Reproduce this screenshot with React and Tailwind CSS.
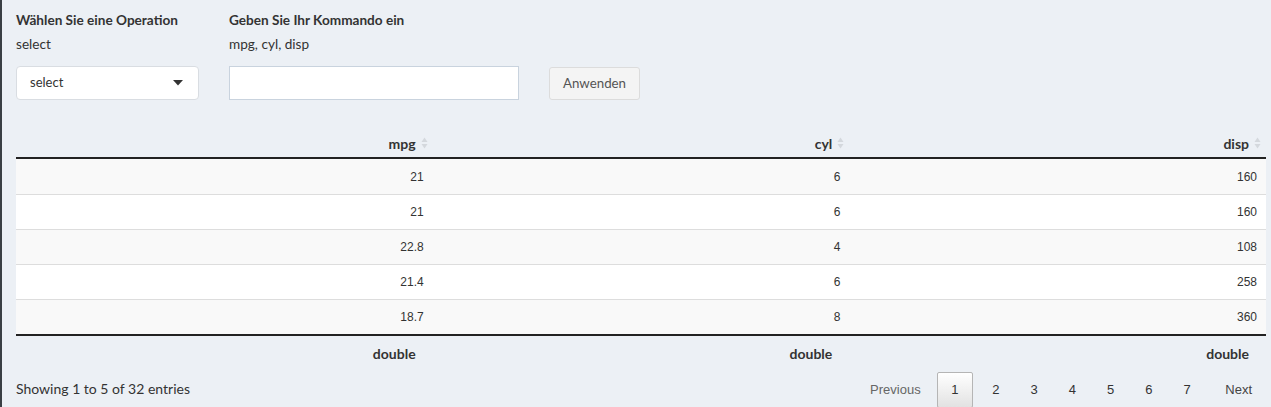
import React from 'react';

const rows = [
  ['21', '6', '160'],
  ['21', '6', '160'],
  ['22.8', '4', '108'],
  ['21.4', '6', '258'],
  ['18.7', '8', '360'],
];

const SortIcon = () => (
  <svg width="7" height="12" viewBox="0 0 7 12" className="ml-[5px] inline-block">
    <path d="M3.5 0.5 L6.5 5 L0.5 5 Z" fill="#d4d8dd" />
    <path d="M3.5 11.5 L6.5 7 L0.5 7 Z" fill="#d4d8dd" />
  </svg>
);

const Caret = () => (
  <svg width="10" height="6" viewBox="0 0 10 6">
    <path d="M0 0 L10 0 L5 5.5 Z" fill="#333" />
  </svg>
);

const ss = "font-['Lato',sans-serif]";
const ar = "font-['Liberation_Sans',Arial,sans-serif]";

export default function App() {
  const pages = ['1', '2', '3', '4', '5', '6', '7'];

  return (
    <div className={`w-[1271px] h-[407px] overflow-hidden bg-[#ecf0f5] border-l-2 border-[#3a3f44] pl-[14px] pr-[5px] text-[#333] ${ss}`}>
      {/* form row */}
      <div className="flex items-start pt-[10px]">
        <div className="w-[183px]">
          <div className="h-[20px] leading-[20px] text-[13.6px] font-bold whitespace-nowrap">Wählen Sie eine Operation</div>
          <div className="mt-[4px] h-[20px] leading-[20px] text-[13.6px]">select</div>
          <div className="mt-[12px] h-[34px] bg-white border border-[#d9dde2] rounded-[4px] flex items-center justify-between pl-[13px] pr-[15px] text-[13px]">
            <span>select</span>
            <Caret />
          </div>
        </div>
        <div className="ml-[30px] w-[290px]">
          <div className="h-[20px] leading-[20px] text-[13.6px] font-bold whitespace-nowrap">Geben Sie Ihr Kommando ein</div>
          <div className="mt-[4px] h-[20px] leading-[20px] text-[13.6px]">mpg, cyl, disp</div>
          <input className="mt-[12px] h-[34px] w-[290px] bg-white border border-[#c9d3de] outline-none px-[12px] text-[13px]" />
        </div>
        <button className="ml-[30px] mt-[57px] h-[33px] px-[13px] bg-[#f4f4f4] border border-[#dcdcdc] rounded-[3px] text-[13.3px] text-[#555]">
          Anwenden
        </button>
      </div>

      {/* table */}
      <div className="mt-[29px]">
        <div className="grid grid-cols-3 h-[30px] border-b-2 border-[#222] text-[14px] font-bold">
          {['mpg', 'cyl', 'disp'].map(h => (
            <div key={h} className="flex items-center justify-end pr-[5px]">
              <span>{h}</span>
              <SortIcon />
            </div>
          ))}
        </div>
        {rows.map((r, i) => (
          <div
            key={i}
            className={`grid grid-cols-3 h-[35px] ${i > 0 ? 'border-t border-[#ddd]' : ''} ${i % 2 === 0 ? 'bg-[#f9f9f9]' : 'bg-white'} text-[12px] ${ar}`}
          >
            {r.map((c, j) => (
              <div key={j} className="flex items-center justify-end pr-[9px]">{c}</div>
            ))}
          </div>
        ))}
        <div className="grid grid-cols-3 h-[36px] border-t-2 border-[#222] text-[14px] font-bold">
          {['double', 'double', 'double'].map((f, j) => (
            <div key={j} className="flex items-center justify-end pr-[17px]">{f}</div>
          ))}
        </div>
      </div>

      {/* info + pagination */}
      <div className="flex items-start justify-between">
        <div className="pt-[8px] text-[14px]">Showing 1 to 5 of 32 entries</div>
        <div className={`flex items-center pt-[2px] text-[13px] ${ar}`}>
          <div className="px-[13px] py-[7px] border border-transparent text-[#666]">Previous</div>
          {pages.map(p => (
            <div
              key={p}
              className={`ml-[2px] text-center px-[13.5px] py-[7px] border rounded-[2px] ${p === '1' ? 'mr-[3px] border-[#b5b5b5] bg-gradient-to-b from-white to-[#e2e2e2]' : 'border-transparent'}`}
            >
              {p}
            </div>
          ))}
          <div className="ml-[6px] px-[13px] py-[7px] border border-transparent text-[#444]">Next</div>
        </div>
      </div>
    </div>
  );
}
